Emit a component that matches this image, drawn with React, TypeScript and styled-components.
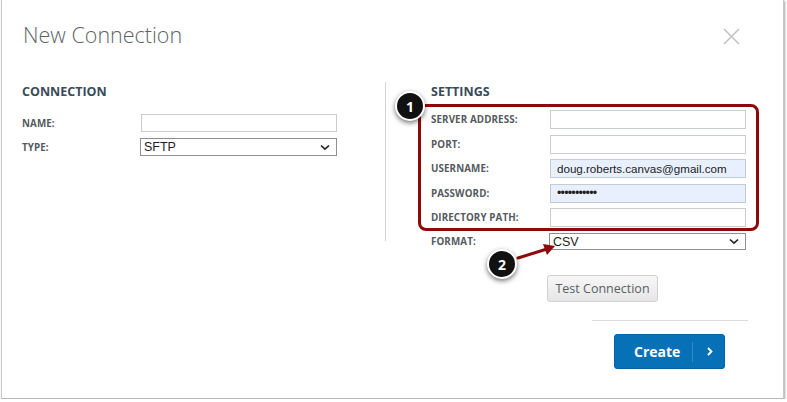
import React from "react";
import styled, { createGlobalStyle } from "styled-components";

const GlobalStyle = createGlobalStyle`
  html, body {
    margin: 0;
    padding: 0;
    background: #ffffff;
  }
  * {
    box-sizing: border-box;
  }
`;

const RED = "#8e0a0a";

export default function App() {
  return (
    <>
      <GlobalStyle />
      <Dialog>
        <Header>
          <Title>New Connection</Title>
          <CloseButton aria-label="Close">
            <svg width="17" height="17" viewBox="0 0 17 17">
              <path d="M1 1 L16 16 M16 1 L1 16" stroke="#c4c4c4" strokeWidth="1.6" />
            </svg>
          </CloseButton>
        </Header>

        <Columns>
          <LeftColumn>
            <SectionTitle>CONNECTION</SectionTitle>
            <Rows $gap={6}>
              <Row>
                <Label>NAME:</Label>
                <TextInput $height={18} />
              </Row>
              <Row>
                <Label>TYPE:</Label>
                <Select $height={18}>
                  <span>SFTP</span>
                  <Chevron />
                </Select>
              </Row>
            </Rows>
          </LeftColumn>

          <RightColumn>
            <SectionTitle>SETTINGS</SectionTitle>
            <Highlighted>
              <Rows $gap={5.6}>
                <Row>
                  <Label>SERVER ADDRESS:</Label>
                  <TextInput $height={19} />
                </Row>
                <Row>
                  <Label>PORT:</Label>
                  <TextInput $height={19} />
                </Row>
                <Row>
                  <Label>USERNAME:</Label>
                  <TextInput $height={19} $filled>
                    doug.roberts.canvas@gmail.com
                  </TextInput>
                </Row>
                <Row>
                  <Label>PASSWORD:</Label>
                  <TextInput $height={19} $filled>
                    <Dots>•••••••••••</Dots>
                  </TextInput>
                </Row>
                <Row>
                  <Label>DIRECTORY PATH:</Label>
                  <TextInput $height={19} />
                </Row>
              </Rows>
              <HighlightFrame />
              <Badge style={{ left: -36, top: -19 }}>1</Badge>
            </Highlighted>
            <FormatRow>
              <Label>FORMAT:</Label>
              <Select $height={17}>
                <span>CSV</span>
                <Chevron />
              </Select>
              <Pointer viewBox="0 0 40 20" width="40" height="20">
                <path d="M1 15 L30 6" stroke={RED} strokeWidth="3" strokeLinecap="round" />
                <path d="M26 1 L38 3 L30 12 Z" fill={RED} />
              </Pointer>
              <Badge style={{ left: 56, top: 16 }}>2</Badge>
            </FormatRow>
          </RightColumn>
        </Columns>

        <TestArea>
          <TestButton>Test Connection</TestButton>
        </TestArea>

        <Footer>
          <FooterRule />
          <CreateButton>
            <CreateText>Create</CreateText>
            <CreateSep />
            <svg width="8" height="9" viewBox="0 0 8 9">
              <path d="M2 1 L5.5 4.5 L2 8" stroke="#fff" strokeWidth="1.8" fill="none" />
            </svg>
          </CreateButton>
        </Footer>
      </Dialog>
    </>
  );
}

function Chevron() {
  return (
    <svg width="10" height="7" viewBox="0 0 10 7">
      <path d="M1 1.5 L5 5.2 L9 1.5" stroke="#222" strokeWidth="1.7" fill="none" />
    </svg>
  );
}

const Dialog = styled.div`
  position: relative;
  margin-left: 1px;
  width: 783px;
  height: 399px;
  background: #ffffff;
  border-left: 1px solid #c8c8c8;
  border-right: 1px solid #c8c8c8;
  border-bottom: 1px solid #b8b8b8;
  box-shadow: 1px 1px 2px rgba(0, 0, 0, 0.35);
  font-family: "Open Sans", "Liberation Sans", sans-serif;
`;

const Header = styled.div`
  display: flex;
  align-items: flex-start;
  justify-content: space-between;
  padding: 20px 43px 0 21px;
  height: 82px;
`;

const Title = styled.h1`
  margin: 0;
  font-size: 21.5px;
  font-weight: 300;
  color: #5d6468;
  line-height: 30px;
`;

const CloseButton = styled.div`
  padding-top: 8px;
  line-height: 0;
`;

const Columns = styled.div`
  display: grid;
  grid-template-columns: 384px 1fr;
`;

const LeftColumn = styled.div`
  padding-left: 20px;
  border-right: 1px solid #d4d4d4;
  height: 159px;
`;

const RightColumn = styled.div`
  padding-left: 45px;
`;

const SectionTitle = styled.h2`
  margin: 0 0 12px 0;
  height: 20px;
  font-size: 12.5px;
  font-weight: 700;
  color: #394b58;
  line-height: 20px;
`;

const Rows = styled.div<{ $gap: number }>`
  display: flex;
  flex-direction: column;
  gap: ${(p) => p.$gap}px;
`;

const Row = styled.div`
  display: flex;
  align-items: center;
`;

const Label = styled.div`
  width: 119px;
  font-size: 9.8px;
  font-weight: 700;
  color: #555a5e;
  letter-spacing: 0.1px;
`;

const TextInput = styled.div<{ $height: number; $filled?: boolean }>`
  width: 196px;
  height: ${(p) => p.$height}px;
  border: 1px solid ${(p) => (p.$filled ? "#c4cad6" : "#c9cdd1")};
  background: ${(p) => (p.$filled ? "#e8f0fe" : "#ffffff")};
  font-family: "Liberation Sans", Arial, sans-serif;
  font-size: 11.6px;
  color: #222;
  padding: 0 6px;
  display: flex;
  align-items: center;
  white-space: nowrap;
`;

const Dots = styled.span`
  font-size: 12.5px;
  letter-spacing: -0.8px;
`;

const Select = styled.div<{ $height: number }>`
  width: 197px;
  height: ${(p) => p.$height}px;
  margin-left: -1px;
  border: 1px solid #8f8f8f;
  background: #ffffff;
  font-family: "Liberation Sans", Arial, sans-serif;
  font-size: 12.5px;
  color: #222;
  padding: 0 6px 0 3px;
  display: flex;
  align-items: center;
  justify-content: space-between;
`;

const Highlighted = styled.div`
  position: relative;
  margin-top: -4px;
`;

const HighlightFrame = styled.div`
  position: absolute;
  left: -13px;
  right: 24px;
  top: -6px;
  bottom: -4px;
  border: 3px solid ${RED};
  border-radius: 8px;
  pointer-events: none;
`;

const Badge = styled.div`
  position: absolute;
  width: 30px;
  height: 30px;
  border-radius: 50%;
  background: #111111;
  border: 2px solid #ffffff;
  box-shadow: 0 2px 5px rgba(0, 0, 0, 0.55);
  color: #ffffff;
  font-size: 14px;
  font-weight: 700;
  display: flex;
  align-items: center;
  justify-content: center;
`;

const FormatRow = styled(Row)`
  position: relative;
  margin-top: 6px;
`;

const Pointer = styled.svg`
  position: absolute;
  left: 86px;
  top: 10px;
  overflow: visible;
`;

const TestArea = styled.div`
  display: flex;
  padding-left: 545px;
  margin-top: 25px;
`;

const TestButton = styled.div`
  width: 111px;
  height: 27px;
  border: 1px solid #cdd1d4;
  border-radius: 3px;
  background: linear-gradient(#f7f7f7, #e6e6e6);
  font-size: 12.5px;
  color: #5a5f63;
  display: flex;
  align-items: center;
  justify-content: center;
`;

const Footer = styled.div`
  display: flex;
  flex-direction: column;
  align-items: flex-start;
  padding-left: 590px;
  margin-top: 18px;
`;

const FooterRule = styled.div`
  width: 156px;
  height: 1px;
  background: #dcdcdc;
`;

const CreateButton = styled.div`
  margin-top: 13px;
  margin-left: 22px;
  width: 111px;
  height: 35px;
  background: #0771b8;
  border: 1px solid #0862a0;
  border-radius: 3px;
  display: flex;
  align-items: center;
  padding-left: 19px;
`;

const CreateText = styled.span`
  font-size: 14px;
  font-weight: 700;
  color: #ffffff;
`;

const CreateSep = styled.div`
  width: 1px;
  height: 20px;
  background: rgba(255, 255, 255, 0.18);
  margin: 0 13px 0 12px;
`;
